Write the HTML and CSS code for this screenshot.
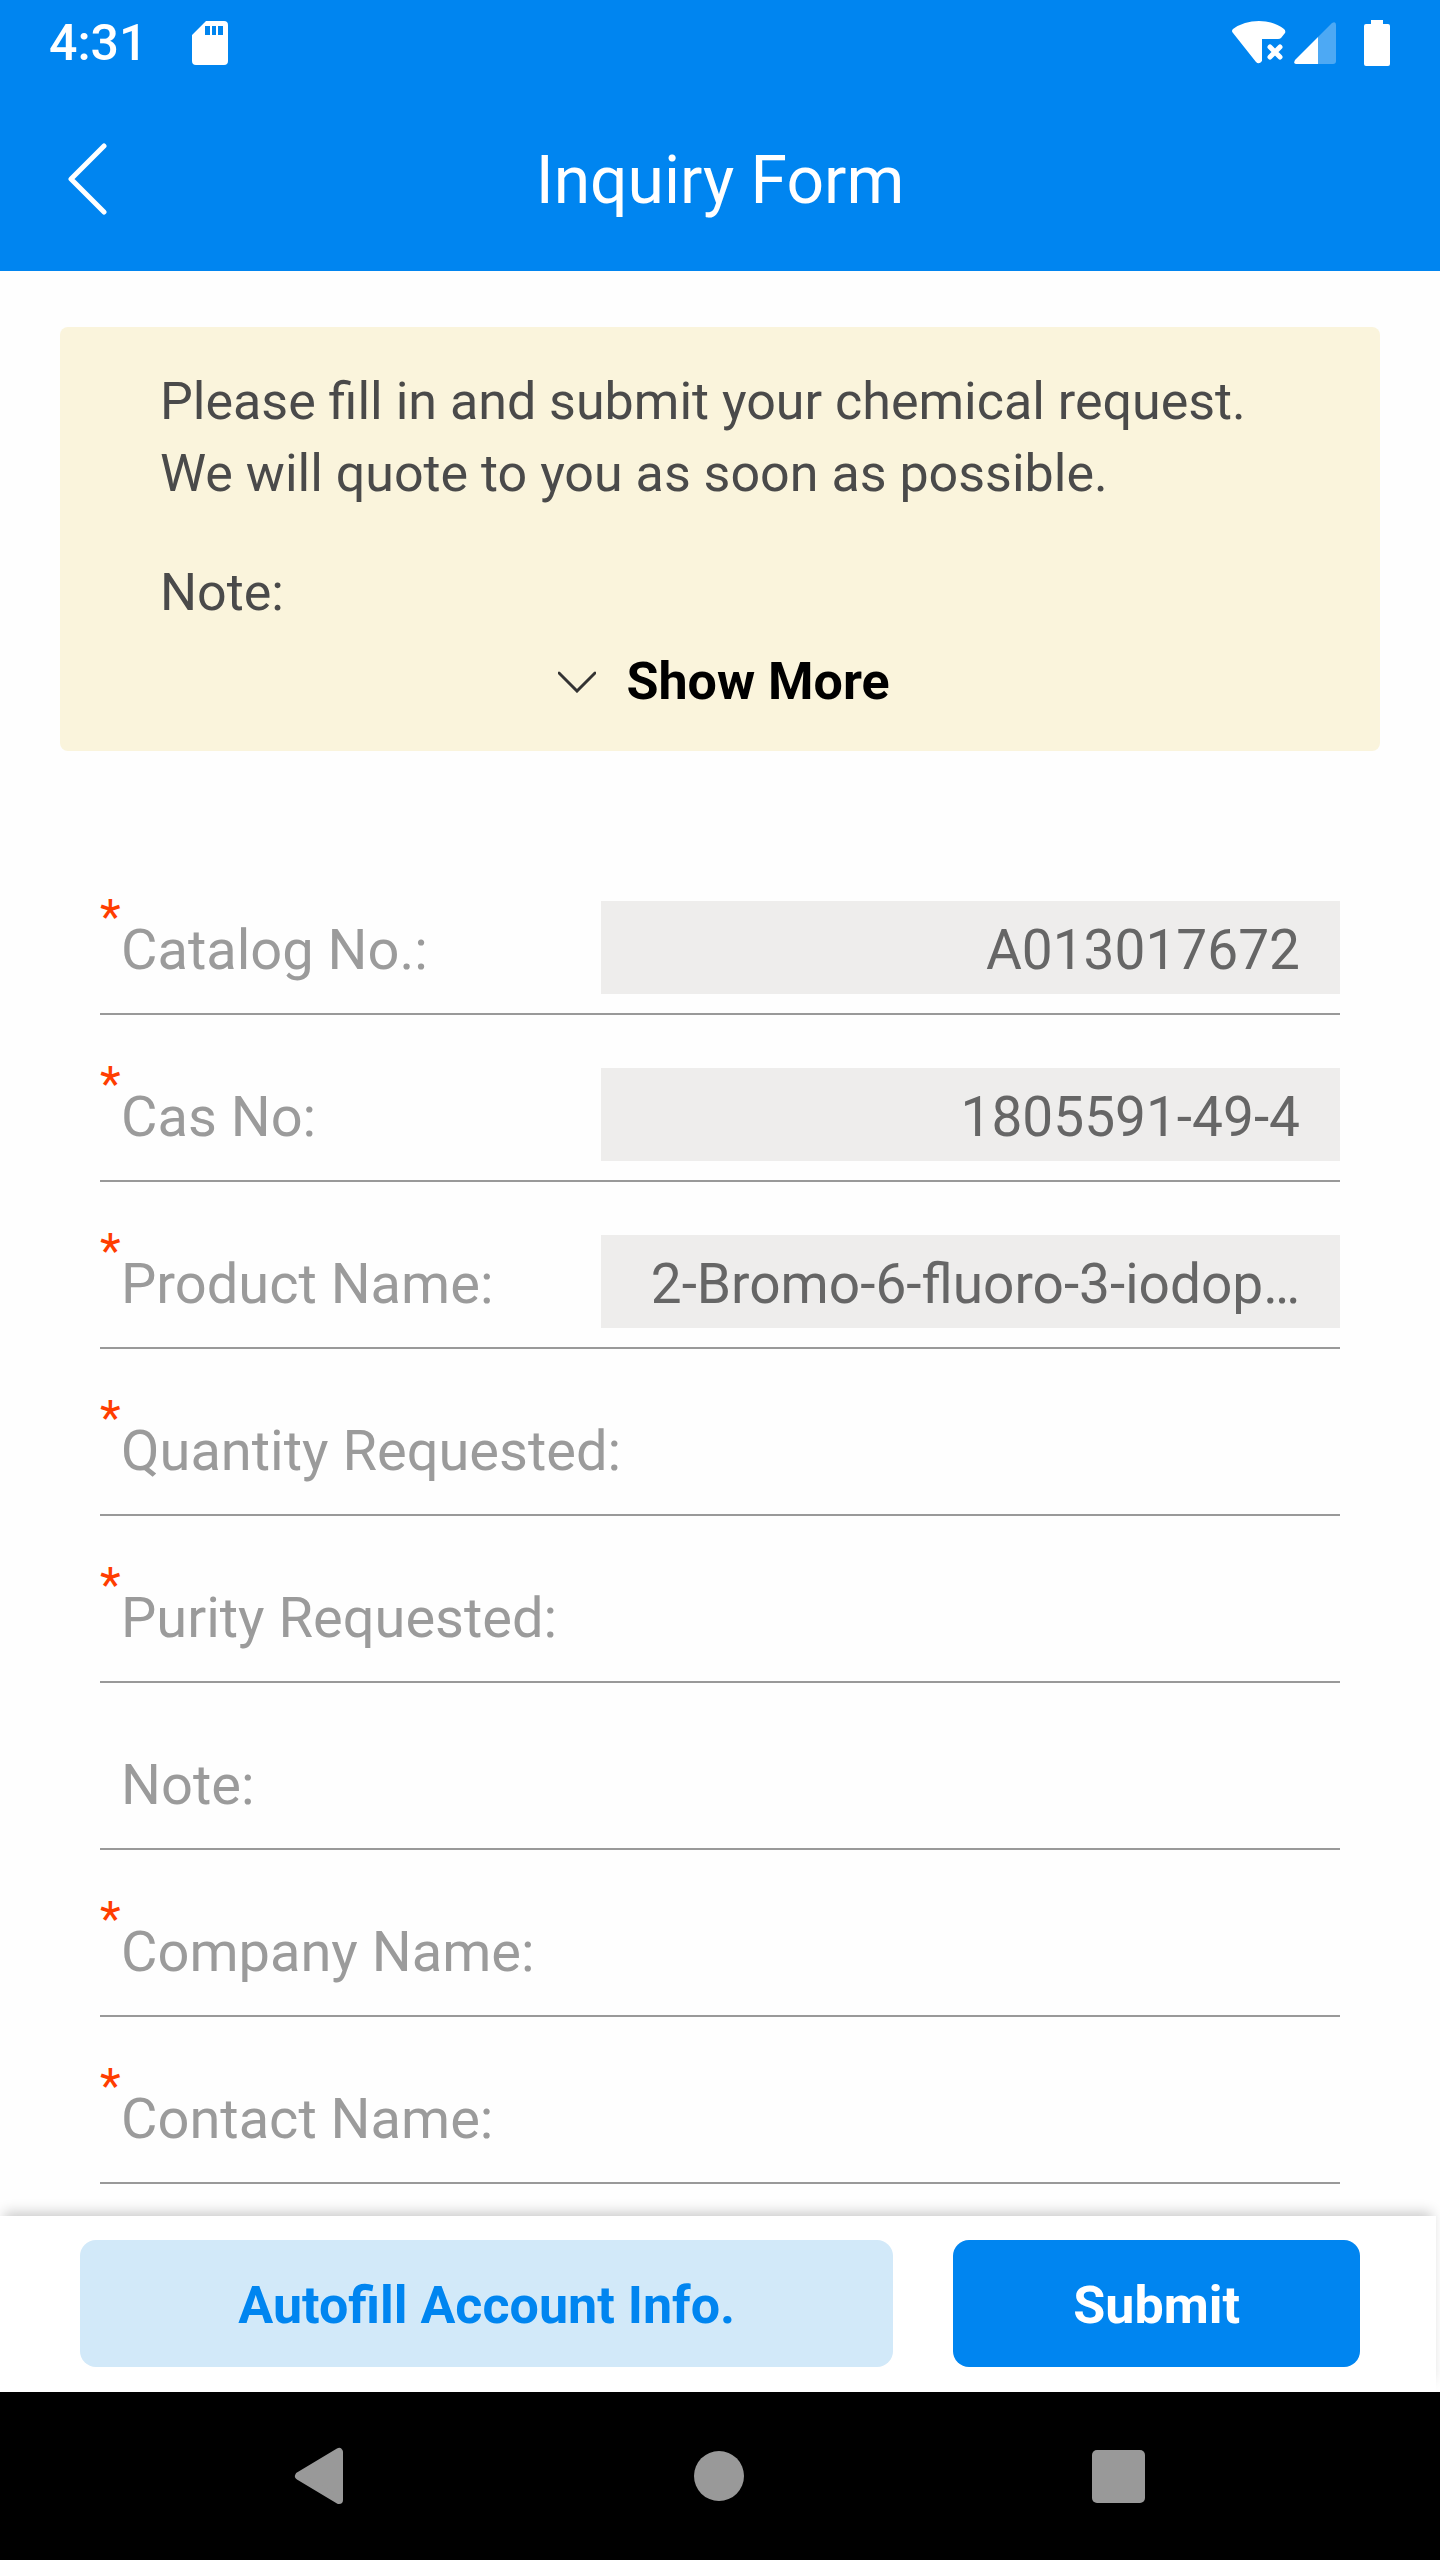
FILE: index.html
```
<!DOCTYPE html>
<html lang="en">

<head>
  <meta charset="utf-8">
  <meta name="viewport" content="width=device-width">
  <title>Inquiry Form</title>
  <link rel="stylesheet" href="styles.css">
</head>

<body>
  <header>
    <div class="status">
      <span class="time">4:31</span>
      <svg class="sd" width="36" height="44" viewBox="0 0 36 44">
        <path fill="#fff" fill-rule="evenodd" d="M14 0H32a4 4 0 0 1 4 4V40a4 4 0 0 1-4 4H4a4 4 0 0 1-4-4V14ZM13 5v9h5V5ZM20 5v9h4V5ZM26 5v9h5V5Z"/>
      </svg>
      <svg width="54" height="44" viewBox="0 0 54 44">
        <path fill="#fff" d="M1 12Q-1 10 1 8Q12 0 27 0Q42 0 52 8Q54 10 53 12L49 17Q48 18 46 18H30V40Q27 44 24 41Z"/>
        <path stroke="#fff" stroke-width="5" stroke-linecap="round" d="M38 26L48 36M48 26L38 36"/>
      </svg>
      <svg class="signal" width="42" height="42" viewBox="0 0 42 42">
        <path fill="#fff" fill-opacity=".3" d="M24 15L38 1Q42-1 42 3V39Q42 42 39 42H24Z"/>
        <path fill="#fff" d="M24 15V42H2Q-1 42 1 38Z"/>
      </svg>
      <svg width="26" height="46" viewBox="0 0 26 46">
        <path fill="#fff" d="M7 0H19V4H24Q26 4 26 6V44Q26 46 24 46H2Q0 46 0 44V6Q0 4 2 4H7Z"/>
      </svg>
    </div>
    <div class="titlebar">
      <button type="button" class="back" aria-label="Back">
        <svg width="40" height="72" viewBox="0 0 40 72">
          <path fill="none" stroke="#fff" stroke-width="5" stroke-linecap="round" stroke-linejoin="round" d="M36 3L3 36L36 69"/>
        </svg>
      </button>
      <h1>Inquiry Form</h1>
    </div>
  </header>

  <main>
    <section class="notice">
      <p>Please fill in and submit your chemical request.<br>We will quote to you as soon as possible.</p>
      <p>Note:</p>
      <button type="button" class="more">
        <svg width="38" height="22" viewBox="0 0 38 22">
          <path fill="none" stroke="#333" stroke-width="3" stroke-linecap="round" d="M1 2L19 20L37 2"/>
        </svg>
        Show More
      </button>
    </section>

    <form id="inquiry">
      <div class="row">
        <label for="catalog"><span class="star">*</span>Catalog No.:</label>
        <input type="text" id="catalog" value="A013017672" readonly>
      </div>
      <div class="row">
        <label for="cas"><span class="star">*</span>Cas No:</label>
        <input type="text" id="cas" value="1805591-49-4" readonly>
      </div>
      <div class="row">
        <label for="product"><span class="star">*</span>Product Name:</label>
        <input type="text" id="product" value="2-Bromo-6-fluoro-3-iodop…" readonly>
      </div>
      <div class="row">
        <label for="quantity"><span class="star">*</span>Quantity Requested:</label>
        <input type="text" id="quantity">
      </div>
      <div class="row">
        <label for="purity"><span class="star">*</span>Purity Requested:</label>
        <input type="text" id="purity">
      </div>
      <div class="row">
        <label for="note" class="optional">Note:</label>
        <input type="text" id="note">
      </div>
      <div class="row">
        <label for="company"><span class="star">*</span>Company Name:</label>
        <input type="text" id="company">
      </div>
      <div class="row">
        <label for="contact"><span class="star">*</span>Contact Name:</label>
        <input type="text" id="contact">
      </div>
    </form>
  </main>

  <div class="bottom">
    <div class="actions">
      <button type="button" class="autofill">Autofill Account Info.</button>
      <button type="submit" form="inquiry" class="submit">Submit</button>
    </div>
    <nav>
      <button type="button" aria-label="Back">
        <svg width="52" height="60" viewBox="0 0 52 60">
          <path fill="#999" stroke="#999" stroke-width="8" stroke-linejoin="round" d="M6 30L46 6V54Z"/>
        </svg>
      </button>
      <button type="button" aria-label="Home">
        <svg width="50" height="50" viewBox="0 0 50 50">
          <circle cx="25" cy="25" r="25" fill="#999"/>
        </svg>
      </button>
      <button type="button" aria-label="Recent apps">
        <svg width="53" height="53" viewBox="0 0 53 53">
          <rect width="53" height="53" rx="5" fill="#999"/>
        </svg>
      </button>
    </nav>
  </div>
</body>

</html>
```

FILE: styles.css
```
* {
  box-sizing: border-box;
}

body {
  margin: 0;
  min-height: 100vh;
  display: flex;
  flex-direction: column;
  font-family: Roboto, "Liberation Sans", sans-serif;
  background: #fefefe;
}

button,
input {
  font-family: inherit;
  border: 0;
  padding: 0;
  background: none;
}

button {
  cursor: pointer;
}

svg {
  display: block;
}

header {
  background: #0085f0;
  color: #fff;
}

.status {
  display: flex;
  align-items: center;
  height: 86px;
  padding: 0 50px 0 49px;
}

.time {
  font-size: 50px;
  font-weight: 500;
}

.sd {
  margin-left: 45px;
  margin-right: auto;
}

.signal {
  margin-left: 8px;
  margin-right: 28px;
}

.titlebar {
  display: grid;
  grid-template-columns: 1fr auto 1fr;
  align-items: center;
  height: 185px;
  padding: 0 68px;
}

.back {
  justify-self: start;
}

h1 {
  margin: 0;
  padding-top: 4px;
  font-size: 66px;
  font-weight: 400;
}

/* yellow notice box */
.notice {
  margin: 56px 60px 0;
  padding: 39px 100px 33px;
  border-radius: 8px;
  background: #faf4dc;
  color: #4a4a4a;
  font-size: 52px;
  line-height: 72px;
}

.notice p {
  margin: 0 0 47px;
}

.notice p + p {
  margin-bottom: 17px;
}

.more {
  display: flex;
  align-items: center;
  gap: 30px;
  margin: 0 auto;
  padding-left: 8px;
  color: #000;
  font-size: 52px;
  font-weight: 700;
  line-height: 72px;
}

/* form rows */
form {
  margin: 97px 100px 32px;
}

.row {
  display: flex;
  padding: 45px 0 19px;
  border-bottom: 2px solid #999;
}

label {
  display: flex;
  min-width: 501px;
  padding-top: 8px;
  color: #9b9b9b;
  font-size: 56px;
  line-height: 99px;
  height: 101px;
  white-space: nowrap;
}

.star {
  width: 21px;
  margin-top: -8px;
  color: #ff3d00;
  font-size: 48px;
  line-height: 48px;
}

.optional {
  padding-left: 21px;
}

.row input {
  flex: 1;
  min-width: 0;
  height: 93px;
  margin-top: 8px;
  padding: 4px 40px 0;
  color: #666;
  font-size: 55px;
  text-align: right;
  text-overflow: ellipsis;
}

.row input:read-only {
  background: #eeedec;
}

.row input:focus {
  outline: none;
}

/* buttons and system bar stay at the bottom */
.bottom {
  position: sticky;
  bottom: 0;
  margin-top: auto;
  overflow-x: clip;
}

.actions {
  display: flex;
  gap: 60px;
  margin-right: 4px;
  padding: 24px 76px 25px 80px;
  background: #fff;
  box-shadow: 0 -8px 12px -4px rgba(0, 0, 0, 0.2);
}

.actions button {
  flex: 1 1 0;
  height: 127px;
  padding-top: 3px;
  border-radius: 16px;
  font-size: 52px;
  font-weight: 700;
}

.actions .autofill {
  flex-grow: 2;
  background: #d2e9f9;
  color: #0085f0;
}

.submit {
  background: #0085f0;
  color: #fff;
}

nav {
  position: relative;
  display: flex;
  justify-content: space-between;
  align-items: center;
  height: 168px;
  padding: 0 295px 0 293px;
  background: #000;
}
```
